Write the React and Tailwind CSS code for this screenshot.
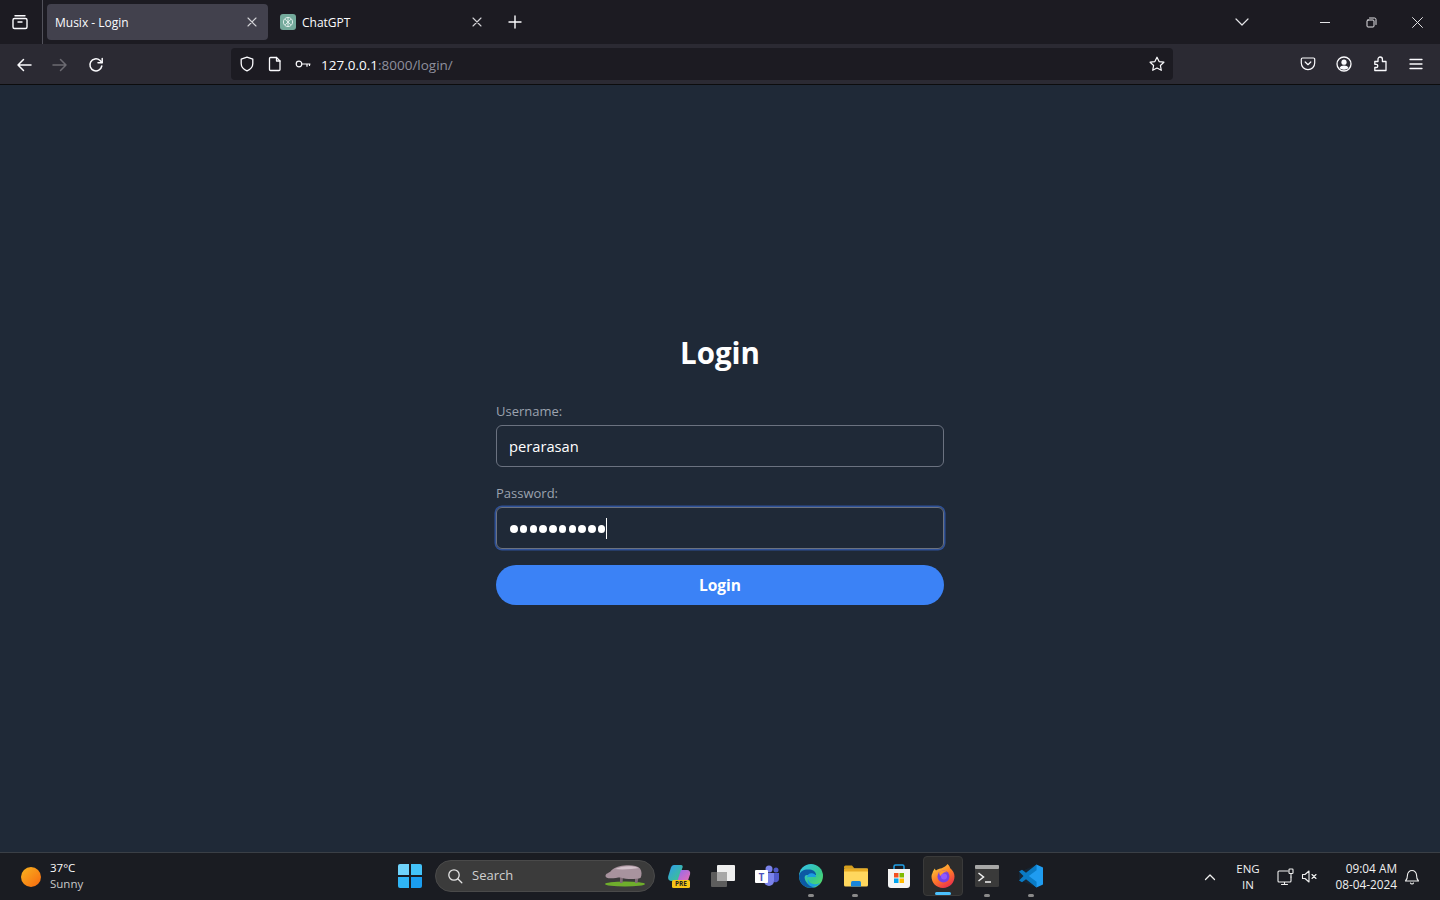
import React from 'react'

const Stroke = ({ size = 16, className = '', vb = 16, sw = 1.5, children }) => (
  <svg width={size} height={size} viewBox={`0 0 ${vb} ${vb}`} fill="none" stroke="currentColor" strokeWidth={sw} strokeLinecap="round" strokeLinejoin="round" className={className}>
    {children}
  </svg>
)

const CloseX = ({ className = 'text-[#d4d4d8]' }) => (
  <Stroke size={10} vb={10} sw={1.1} className={className}>
    <path d="M1 1l8 8M9 1l-8 8" />
  </Stroke>
)

const Tab = ({ active, icon, title, width }) => (
  <div className={`flex h-9 items-center rounded px-2 ${active ? 'bg-[#42414d]' : ''} ${width}`}>
    {icon}
    <span className="flex-1 truncate pt-px text-[12px] text-[#fbfbfe]">{title}</span>
    <span className="mr-[3px] flex"><CloseX /></span>
  </div>
)

const GptIcon = () => (
  <span className="mr-[6px] flex h-4 w-4 items-center justify-center rounded-[3px] bg-[#74aa9c]">
    <svg width="12" height="12" viewBox="0 0 12 12" fill="none" stroke="#e8f3f0" strokeWidth="0.9">
      <circle cx="6" cy="6" r="4.6" />
      <path d="M3 3.2l5.8 5.6M9 3.2L3.2 8.8M6 1.4v9.2" />
    </svg>
  </span>
)

const TabBar = () => (
  <div className="flex h-11 items-center bg-[#1c1b22]">
    <div className="flex h-full w-[43px] items-center justify-center border-r border-[#52525b] pr-[2px]">
      <Stroke size={18} vb={18} sw={1.4} className="text-[#fbfbfe]">
        <rect x="2" y="5.5" width="14" height="10" rx="1.5" />
        <path d="M4 2.8h10M7 9h4" />
      </Stroke>
    </div>
    <div className="ml-1 flex items-center">
      <Tab active title="Musix - Login" width="w-[221px]" />
      <div className="ml-1"><Tab title="ChatGPT" icon={<GptIcon />} width="w-[221px]" /></div>
      <span className="ml-[15px] flex text-[#fbfbfe]">
        <Stroke size={14} vb={14} sw={1.4}><path d="M7 1v12M1 7h12" /></Stroke>
      </span>
    </div>
    <div className="ml-auto flex items-center">
      <span className="mr-[71px] flex text-[#e4e4e7]">
        <Stroke size={14} vb={14} sw={1.2}><path d="M1 4l6 6 6-6" /></Stroke>
      </span>
      <span className="mr-[36px] block h-px w-[10px] bg-[#e4e4e7]" />
      <span className="mr-[35px] flex text-[#e4e4e7]">
        <Stroke size={11} vb={11} sw={1}>
          <rect x="1" y="3" width="7" height="7" rx="1" />
          <path d="M3.5 1h5a1.5 1.5 0 0 1 1.5 1.500v5" />
        </Stroke>
      </span>
      <span className="mr-[17px] flex"><Stroke size={11} vb={10} sw={0.9} className="text-[#e4e4e7]"><path d="M0.500 0.500l9 9M9.500 0.500l-9 9" /></Stroke></span>
    </div>
  </div>
)

const ToolIcon = ({ children, className = 'text-[#fbfbfe]' }) => (
  <span className={`flex h-4 w-4 items-center justify-center ${className}`}>{children}</span>
)

const Toolbar = () => (
  <div className="box-content flex h-10 items-center border-b border-[#0c0c0d] bg-[#2b2a33]">
    <div className="flex w-[231px] items-center gap-5 pl-4 pt-px">
      <ToolIcon>
        <Stroke><path d="M15 8H2M7.500 2.500L2 8l5.500 5.500" /></Stroke>
      </ToolIcon>
      <ToolIcon className="text-[#6c6b72]">
        <Stroke><path d="M1 8h13M8.500 2.500L14 8l-5.500 5.500" /></Stroke>
      </ToolIcon>
      <ToolIcon>
        <Stroke>
          <path d="M13.800 9A6 6 0 1 1 11.800 3.300L14 5.500" />
          <path d="M14.200 1.500v4.200H10" />
        </Stroke>
      </ToolIcon>
    </div>
    <div className="flex h-8 w-[942px] items-center rounded bg-[#1c1b22] pl-2 pr-2">
      <ToolIcon>
        <Stroke sw={1.3}><path d="M8 1.200l5.800 2v4.200c0 3.700-2.600 6-5.800 7.400-3.200-1.400-5.800-3.700-5.800-7.400V3.200z" /></Stroke>
      </ToolIcon>
      <span className="ml-3 flex">
        <ToolIcon>
          <Stroke sw={1.3}><path d="M3.500 1.500h6l3.500 3.500v8.500a1 1 0 0 1-1 1H3.500a1 1 0 0 1-1-1v-11a1 1 0 0 1 1-1z" /><path d="M9.500 1.500V5H13" /></Stroke>
        </ToolIcon>
      </span>
      <span className="ml-3 flex">
        <ToolIcon>
          <Stroke sw={1.2}><circle cx="4" cy="8" r="2.800" /><path d="M6.800 8H15M12 8v2.200M14.500 8v1.500" /></Stroke>
        </ToolIcon>
      </span>
      <span className="ml-[10px] pt-[2px] text-[13.5px] text-[#fbfbfe]">
        127.0.0.1<span className="text-[#8f8f9d]">:8000/login/</span>
      </span>
      <span className="ml-auto flex">
        <ToolIcon>
          <Stroke sw={1.2}><path d="M8 1.200l2.100 4.400 4.800.6-3.500 3.300.9 4.800L8 12l-4.300 2.300.9-4.800L1.100 6.200l4.800-.6z" /></Stroke>
        </ToolIcon>
      </span>
    </div>
    <div className="ml-auto flex items-center gap-5 pr-4">
      <ToolIcon>
        <Stroke sw={1.2}><path d="M2.500 2h11a1.200 1.200 0 0 1 1.200 1.200V7a6.700 6.700 0 0 1-13.400 0V3.200A1.200 1.200 0 0 1 2.500 2z" /><path d="M5.200 6l2.800 2.700L10.800 6" /></Stroke>
      </ToolIcon>
      <ToolIcon>
        <svg width="16" height="16" viewBox="0 0 16 16" fill="none">
          <circle cx="8" cy="8" r="7" stroke="currentColor" strokeWidth="1.300" />
          <circle cx="8" cy="6.200" r="2.600" fill="currentColor" />
          <path d="M3.500 12c1-2 2.500-2.600 4.500-2.600s3.500.6 4.500 2.600c-1.200 1.100-2.800 1.700-4.500 1.700s-3.300-.6-4.500-1.700z" fill="currentColor" />
        </svg>
      </ToolIcon>
      <ToolIcon>
        <Stroke sw={1.300}><path d="M14 14.500H2.800v-3h1.400a1.600 1.600 0 0 0 0-3.200H2.800V5.500H6V3.200a2.200 2.200 0 0 1 4.400 0V5.500H14z" /></Stroke>
      </ToolIcon>
      <ToolIcon>
        <Stroke sw={1.300}><path d="M2 3.500h12M2 8h12M2 12.500h12" /></Stroke>
      </ToolIcon>
    </div>
  </div>
)

const Field = ({ label, children, focused }) => (
  <div className="mb-4">
    <label className="mb-1 block text-[13px] leading-[20px] text-[#9ca3af]">{label}</label>
    <div className={`flex h-[42px] items-center rounded-md border border-[#6b7280] px-3 ${focused ? 'ring-[1.5px] ring-[#2f5197]' : ''}`}>
      {children}
    </div>
  </div>
)

const LoginForm = () => (
  <main className="flex flex-1 flex-col items-center bg-[#1f2937] pt-[248px]">
    <h1 className="mb-7 text-center text-[29.5px] font-bold leading-[40px] text-white">Login</h1>
    <form className="w-[448px]">
      <Field label="Username:">
        <span className="pt-px text-[14.7px] text-white">perarasan</span>
      </Field>
      <Field label="Password:" focused>
        <span className="ml-px flex items-center gap-[2.25px] pt-[2px]">
          {[...Array(10)].map((_, i) => (
            <span key={i} className="h-[7.5px] w-[7.5px] rounded-full bg-white" />
          ))}
        </span>
        <span className="ml-px h-[21px] w-px bg-white" />
      </Field>
      <button type="button" className="h-10 w-full rounded-full bg-[#3b82f6] pt-px text-[15.5px] font-bold text-white">Login</button>
    </form>
  </main>
)

const WinLogo = () => (
  <span className="grid h-6 w-6 grid-cols-2 gap-[2px]">
    <span className="rounded-tl-[2px] bg-[#6fd3fb]" />
    <span className="rounded-tr-[2px] bg-[#43c2f8]" />
    <span className="rounded-bl-[2px] bg-[#2fb5f6]" />
    <span className="rounded-br-[2px] bg-[#1a9df0]" />
  </span>
)

const Hippo = () => (
  <svg width="40" height="23" viewBox="0 0 40 23">
    <ellipse cx="20" cy="20" rx="20" ry="2.600" fill="#6fae2c" />
    <path d="M15 19h2.500l.5-6h-3zM30 19h2.500l1-6h-3.500z" fill="#7f6b75" />
    <path d="M0.500 12c0-2.500 3-3 5-4.500C8 4 13 2 19 1.500c6-.5 13-.5 16 3 2 2.500 2 7 .5 9.500-6 1.500-14 1.500-20-.5-3 0-6 .8-10 .8-3 0-5-.5-5-2.300z" fill="#a8939e" />
    <path d="M10 5c6-3 17-4 24-1-6 1-16 2-24 1z" fill="#d2c1ca" />
  </svg>
)

const SearchBox = () => (
  <div className="flex h-8 w-[220px] items-center rounded-full border border-[#4a4a4a] bg-[#3b3b3b] pl-[11px] pr-[9px]">
    <Stroke size={16} sw={1.300} className="text-[#e4e4e4]"><circle cx="7" cy="7" r="5.200" /><path d="M11 11l3.800 3.800" /></Stroke>
    <span className="ml-[9px] text-[13px] text-[#d0d0d0]">Search</span>
    <span className="ml-auto flex"><Hippo /></span>
  </div>
)

const Copilot = () => (
  <svg width="26" height="26" viewBox="0 0 26 26">
    <defs>
      <linearGradient id="cpa" x1="0" y1="0" x2="1" y2="1"><stop offset="0" stopColor="#2f9cf0" /><stop offset="1" stopColor="#40c880" /></linearGradient>
      <linearGradient id="cpb" x1="0" y1="0" x2="1" y2="1"><stop offset="0" stopColor="#8d6cf0" /><stop offset="1" stopColor="#ef6db0" /></linearGradient>
    </defs>
    <path d="M8 2h7c1.500 0 2 1 1.500 2.500L12 18H6c-3 0-4.500-2-3.700-5L5 4.500C5.500 3 6.500 2 8 2z" fill="url(#cpa)" />
    <path d="M15 7h6c2.500 0 3.700 2 3 4.500l-2 6c-.5 1-1.500 1.500-3 1.500h-8z" fill="url(#cpb)" />
    <rect x="6" y="17" width="18" height="8" rx="1.500" fill="#f5c518" />
    <text x="15" y="23.400" textAnchor="middle" fontSize="6.400" fontWeight="700" fontFamily="Open Sans, sans-serif" fill="#222">PRE</text>
  </svg>
)

const Windows = () => (
  <svg width="26" height="24" viewBox="0 0 26 24">
    <rect x="1" y="8" width="16" height="15" rx="1" fill="#5d5d5d" />
    <rect x="7" y="1" width="18" height="16" rx="1" fill="#efefef" />
    <rect x="7" y="8" width="10" height="9" fill="#a8a8a8" />
  </svg>
)

const Teams = () => (
  <svg width="26" height="24" viewBox="0 0 26 24">
    <circle cx="15" cy="5" r="3.500" fill="#7b83eb" />
    <circle cx="22" cy="6" r="2.500" fill="#5059c9" />
    <path d="M10 9h10v8a5 5 0 0 1-10 0z" fill="#7b83eb" />
    <path d="M20 9h5v6a3.500 3.500 0 0 1-5 3z" fill="#5059c9" />
    <rect x="1" y="6" width="13" height="13" rx="1" fill="#fff" />
    <text x="7.500" y="16.500" textAnchor="middle" fontSize="10" fontWeight="700" fontFamily="Open Sans, sans-serif" fill="#4b53bc">T</text>
  </svg>
)

const Edge = () => (
  <svg width="24" height="24" viewBox="0 0 24 24">
    <defs>
      <linearGradient id="edg" x1="0" y1="0" x2="1" y2="1"><stop offset="0" stopColor="#35c1f1" /><stop offset="0.6" stopColor="#36c88f" /><stop offset="1" stopColor="#5fe05f" /></linearGradient>
    </defs>
    <circle cx="12" cy="12" r="12" fill="url(#edg)" />
    <path d="M0 12C1 6 6 5 11 5.500c4 .5 6 3 6 5.500H8c-2 0-3 2-2 4.500 1 3 4 7 10 7.500-2 .8-3 1-4 1C5 24 0 19 0 12z" fill="#0c59a4" />
    <path d="M8 13.500c0-3 3-5 6-4 2 .5 3 2 3 3.500H10c-1 0-2 .5-2 .5zM11 22c-2-2-3-5-2-7 1 4 5 7 12 4-2 3-6 5-10 3z" fill="#1b9de2" />
  </svg>
)

const Folder = () => (
  <svg width="25" height="23" viewBox="0 0 25 23">
    <path d="M1 3a1.500 1.500 0 0 1 1.500-1.500H9l2.500 3H1z" fill="#d69f1c" />
    <rect x="1" y="4.500" width="24" height="18" rx="1.500" fill="#ffd75e" />
    <rect x="1" y="4.500" width="24" height="3" fill="#e8ab24" />
    <path d="M8 22.500v-4a1.500 1.500 0 0 1 1.500-1.500h7a1.500 1.500 0 0 1 1.500 1.500v4z" fill="#1a86d9" />
  </svg>
)

const Store = () => (
  <svg width="24" height="24" viewBox="0 0 24 24">
    <path d="M7 6V2.500A1.500 1.500 0 0 1 8.500 1h7A1.500 1.500 0 0 1 17 2.500V6" fill="none" stroke="#1fa0e8" strokeWidth="1.500" />
    <path d="M1 5h22v16a3 3 0 0 1-3 3H4a3 3 0 0 1-3-3z" fill="#f4f4f4" />
    <rect x="7" y="9" width="4.500" height="4.500" fill="#f25022" />
    <rect x="12.500" y="9" width="4.500" height="4.500" fill="#7fba00" />
    <rect x="7" y="14.500" width="4.500" height="4.500" fill="#00a4ef" />
    <rect x="12.500" y="14.500" width="4.500" height="4.500" fill="#ffb900" />
  </svg>
)

const Firefox = () => (
  <svg width="24" height="24" viewBox="0 0 24 24">
    <defs>
      <linearGradient id="ffx" x1="0.2" y1="0" x2="0.8" y2="1"><stop offset="0" stopColor="#ffd23a" /><stop offset="0.5" stopColor="#ff7a2a" /><stop offset="1" stopColor="#e8264f" /></linearGradient>
    </defs>
    <path d="M1.500 9c.5-2 1.500-3.500 2.500-4.500 0 1 .5 1.500 1 2C7 5 9 4.500 10 4.500 13 3 15.500 2 16.500 0c2 2 2.500 3 2.500 4 3 2.500 4.500 5.500 4.500 8.500C23.500 19 18.500 24 12 24S.5 19 .5 12.500c0-1.200.3-2.500 1-3.500z" fill="url(#ffx)" />
    <circle cx="12.500" cy="12.500" r="6" fill="#7542e5" />
    <path d="M8 8.500c2-2 5-3 8 0-2-.5-4 0-4.500 1.500L9 12z" fill="#ff9a2f" />
    <circle cx="13" cy="12.500" r="3" fill="#9059ff" />
  </svg>
)

const Terminal = () => (
  <svg width="24" height="22" viewBox="0 0 24 22">
    <rect x="0" y="0" width="24" height="22" rx="1.500" fill="#3a3a3a" />
    <rect x="0" y="0" width="24" height="4" rx="1" fill="#a7a7a7" />
    <path d="M3.500 8l5 4-5 4" fill="none" stroke="#f2f2f2" strokeWidth="1.500" />
    <path d="M10 17h6" stroke="#f2f2f2" strokeWidth="1.500" />
  </svg>
)

const VSCode = () => (
  <svg width="24" height="24" viewBox="0 0 24 24">
    <path d="M17.500 0.500L24 3.500v17l-6.500 3L7 13.500z" fill="#1f9cf0" />
    <path d="M17.500 0.500V6L8 12l9.500 6v5.500L0 15.500V8.500z" fill="#0065a9" fillOpacity="0.15" />
    <path d="M17.500 0.500v5.800L9.800 12l7.700 5.700v5.800L7 15.200 3 18.200 0 16.500 4.500 12 0 7.500l3-1.700 4 3z" fill="#0a7bc5" />
  </svg>
)

const AppSlot = ({ children, dot, active }) => (
  <div className={`relative flex h-10 w-10 items-center justify-center rounded ${active ? 'border border-[#3a3a3a] bg-[#2c2c2c]' : ''}`}>
    {children}
    {dot && <span className="absolute bottom-[-1px] left-1/2 h-[3px] w-[6px] -translate-x-1/2 rounded-full bg-[#8a8a8a]" />}
    {active && <span className="absolute bottom-[0px] left-1/2 h-[3px] w-[16px] -translate-x-1/2 rounded-full bg-[#4cc2ff]" />}
  </div>
)

const Taskbar = () => (
  <footer className="flex h-12 items-center border-t border-[#3a3f46] bg-[#1a1c22]">
    <div className="flex w-[390px] items-center pl-[21px]">
      <span className="h-5 w-5 rounded-full bg-gradient-to-br from-[#f6b31f] to-[#f7660f]" />
      <div className="-mt-[2px] ml-[9px] text-[11.5px] leading-[16px]">
        <div className="text-[#fafafa]">37°C</div>
        <div className="text-[#c8c8c8]">Sunny</div>
      </div>
    </div>
    <div className="-mt-[2px] flex items-center">
      <span className="mr-[5px] flex h-10 w-[40px] items-center justify-center"><WinLogo /></span>
      <SearchBox />
      <div className="ml-[4px] flex items-center gap-[4px]">
        <AppSlot><Copilot /></AppSlot>
        <AppSlot><Windows /></AppSlot>
        <AppSlot><Teams /></AppSlot>
        <AppSlot dot><Edge /></AppSlot>
        <AppSlot dot><Folder /></AppSlot>
        <AppSlot><Store /></AppSlot>
        <AppSlot active><Firefox /></AppSlot>
        <AppSlot dot><Terminal /></AppSlot>
        <AppSlot dot><VSCode /></AppSlot>
      </div>
    </div>
    <div className="ml-auto flex items-center pr-[20px] text-[#f0f0f0]">
      <Stroke size={12} vb={12} sw={1.300}><path d="M1.500 8.500L6 4l4.500 4.500" /></Stroke>
      <div className="ml-[20px] w-[24px] text-center text-[11.5px] leading-[16px]">
        <div className="-mx-1">ENG</div>
        <div>IN</div>
      </div>
      <span className="ml-[17px] flex">
        <Stroke size={18} vb={18} sw={1.100}>
          <path d="M11 3H2a1 1 0 0 0-1 1v9a1 1 0 0 0 1 1h11a1 1 0 0 0 1-1V9M7.500 14v2M4.500 16.500h6" />
          <rect x="12" y="1" width="4" height="4.500" rx="0.800" />
          <path d="M14 5.500V9" />
        </Stroke>
      </span>
      <span className="ml-[6px] flex">
        <Stroke size={17} vb={17} sw={1.100}>
          <path d="M1.500 6.500v4h2.500l4 3.500V3L4 6.500zM11 6.500l4 4M15 6.500l-4 4" />
        </Stroke>
      </span>
      <div className="-mt-[2px] ml-[16px] w-[63px] text-right text-[11.8px] leading-[16px]">
        <div>09:04 AM</div>
        <div className="whitespace-nowrap">08-04-2024</div>
      </div>
      <span className="ml-[7px] flex">
        <Stroke size={16} sw={1.100}><path d="M8 1.500a4.500 4.500 0 0 0-4.500 4.500c0 3-.5 4.500-2 6h13c-1.500-1.500-2-3-2-6A4.500 4.500 0 0 0 8 1.500zM6.500 14a1.600 1.600 0 0 0 3 0" /></Stroke>
      </span>
    </div>
  </footer>
)

export default function App() {
  return (
    <div className="flex h-screen flex-col overflow-hidden bg-[#1f2937] font-['Open_Sans',sans-serif]">
      <TabBar />
      <Toolbar />
      <LoginForm />
      <Taskbar />
    </div>
  )
}
